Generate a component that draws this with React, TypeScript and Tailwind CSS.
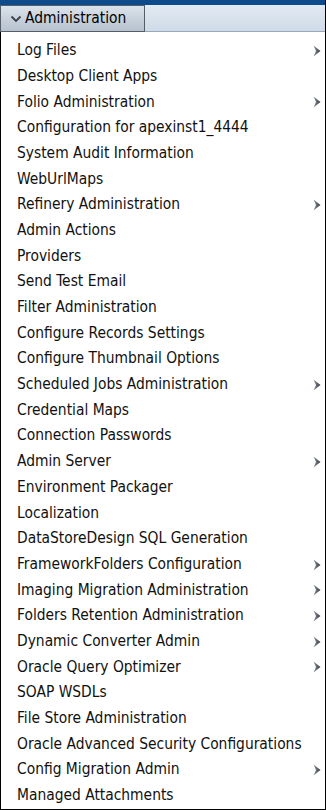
import React from "react";

const items: [string, boolean][] = [
  ["Log Files", true],
  ["Desktop Client Apps", false],
  ["Folio Administration", true],
  ["Configuration for apexinst1_4444", false],
  ["System Audit Information", false],
  ["WebUrlMaps", false],
  ["Refinery Administration", true],
  ["Admin Actions", false],
  ["Providers", false],
  ["Send Test Email", false],
  ["Filter Administration", false],
  ["Configure Records Settings", false],
  ["Configure Thumbnail Options", false],
  ["Scheduled Jobs Administration", true],
  ["Credential Maps", false],
  ["Connection Passwords", false],
  ["Admin Server", true],
  ["Environment Packager", false],
  ["Localization", false],
  ["DataStoreDesign SQL Generation", false],
  ["FrameworkFolders Configuration", true],
  ["Imaging Migration Administration", true],
  ["Folders Retention Administration", true],
  ["Dynamic Converter Admin", true],
  ["Oracle Query Optimizer", true],
  ["SOAP WSDLs", false],
  ["File Store Administration", false],
  ["Oracle Advanced Security Configurations", false],
  ["Config Migration Admin", true],
  ["Managed Attachments", false],
];

function Arrow() {
  return (
    <svg width="8" height="12" viewBox="0 0 8 12">
      <defs>
        <linearGradient id="ag" x1="0" y1="0" x2="1" y2="0">
          <stop offset="0" stopColor="#8e949c" />
          <stop offset="1" stopColor="#383c44" />
        </linearGradient>
      </defs>
      <path d="M0.5 0.5 L7.5 6 L0.5 11.5 L3 6 Z" fill="url(#ag)" />
    </svg>
  );
}

export default function App() {
  return (
    <div
      className="w-[326px] h-[810px] bg-white flex flex-col border-r border-black"
      style={{ fontFamily: '"DejaVu Sans Condensed", "DejaVu Sans", sans-serif' }}
    >
      <div className="h-[5px] bg-[#0d4b8c]" />
      <div className="h-[27px] bg-gradient-to-b from-[#e2eaf3] to-[#cfdbe8] border-b border-[#98a8ba] flex">
        <div className="w-[145px] h-[27px] border border-[#555d66] bg-gradient-to-b from-[#dbe2ea] to-[#b6c2cf] flex items-center pl-[9px] gap-[3px]">
          <svg width="12" height="8" viewBox="0 0 12 8">
            <path d="M1.5 1.5 L6 6 L10.5 1.5" fill="none" stroke="#3a4048" strokeWidth="1.8" />
          </svg>
          <span className="text-[15.4px] text-black leading-none">Administration</span>
        </div>
      </div>
      <div className="flex-1 border-l border-b border-black pt-[6px]">
        {items.map(([label, sub]) => (
          <div key={label} className="h-[25.7px] flex items-center justify-between pl-[16px] pr-[4px]">
            <span className="text-[15.4px] text-[#111] leading-none">{label}</span>
            {sub && <Arrow />}
          </div>
        ))}
      </div>
    </div>
  );
}
